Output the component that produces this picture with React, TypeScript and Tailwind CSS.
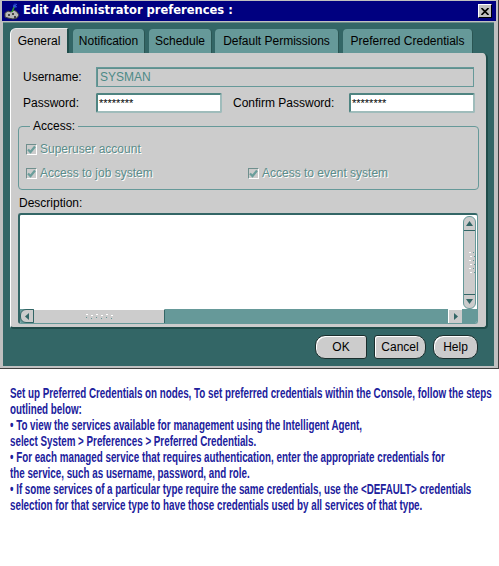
import React from "react";

function Check({ label, className = "" }: { label: string; className?: string }) {
  return (
    <div className={"flex items-center h-[14px] " + className}>
      <div className="w-[11px] h-[11px] bg-[#cccccc] border-t border-l border-[#6f8f8d] border-r border-b border-r-[#ffffff] border-b-[#ffffff] flex items-center justify-center">
        <svg width="9" height="9" viewBox="0 0 9 9">
          <path d="M1 4.5 L3.5 7 L8 1.5" stroke="#6a9e9b" strokeWidth="2.2" fill="none" />
        </svg>
      </div>
      <span className="ml-[3px] text-[12px] text-[#5b8d8a] [text-shadow:1px_1px_0_#ffffff] leading-none">{label}</span>
    </div>
  );
}

function Grip({ vertical }: { vertical?: boolean }) {
  const dots = [0, 1, 2, 3, 4, 5];
  return (
    <div className={vertical ? "flex flex-col gap-[3px]" : "flex gap-[3px]"}>
      {dots.map((i) => (
        <div key={i} className={vertical ? "flex gap-[2px] " + (i % 2 ? "ml-[1px]" : "") : "flex flex-col gap-[2px] " + (i % 2 ? "mt-[1px]" : "")}>
          <div className="w-[2px] h-[1px] bg-[#ffffff]" />
          <div className="w-[1px] h-[1px] bg-[#669999]" />
        </div>
      ))}
    </div>
  );
}

export default function App() {
  const textLines = [
    "Set up Preferred Credentials on nodes, To set preferred credentials within the Console, follow the steps",
    "outlined below:",
    "\u2022 To view the services available for management using the Intelligent Agent,",
    "select System > Preferences > Preferred Credentials.",
    "\u2022 For each managed service that requires authentication, enter the appropriate credentials for",
    "the service, such as username, password, and role.",
    "\u2022 If some services of a particular type require the same credentials, use the <DEFAULT> credentials",
    "selection for that service type to have those credentials used by all services of that type.",
  ];
  return (
    <div className="w-[499px] h-[566px] bg-white overflow-hidden font-['Liberation_Sans',Arial,sans-serif]">
      {/* Window */}
      <div className="w-[499px] h-[369px] bg-[#c0c0c0] border-r border-b border-r-[#404040] border-b-[#404040] pt-[1px] pl-[2px] flex flex-col">
        {/* Title bar */}
        <div className="w-[494px] h-[20px] bg-[#000080] flex items-center">
          <svg width="18" height="17" viewBox="0 0 18 17" className="ml-[1px]">
            <path d="M2 10 L5 8 L8 9 L11 7 L14 9 L16 12 L14 15 L10 16 L5 15 L2 14 Z" fill="#b8b8b8" stroke="#404040" strokeWidth="1" />
            <circle cx="6" cy="12" r="1" fill="#202020" />
            <circle cx="10" cy="11" r="1" fill="#202020" />
            <circle cx="12" cy="14" r="1" fill="#202020" />
            <path d="M9 9 L12 2" stroke="#30a030" strokeWidth="1.5" />
            <path d="M10 2 L14 4 M12 0.5 L12 5 M10 4 L14 1" stroke="#3050e0" strokeWidth="1" />
          </svg>
          <span className="ml-[2px] text-white font-bold text-[11.5px] font-['DejaVu_Sans',Verdana,sans-serif] leading-none">
            Edit Administrator preferences :
          </span>
          <div className="ml-auto mr-[4px] w-[14px] h-[14px] bg-[#c0c0c0] border-t border-l border-t-white border-l-white border-r border-b border-r-[#000000] border-b-[#000000] flex items-center justify-center">
            <svg width="8" height="7" viewBox="0 0 8 7">
              <path d="M0.5 0 L7.5 7 M7.5 0 L0.5 7" stroke="#000" strokeWidth="1.6" />
            </svg>
          </div>
        </div>
        {/* Body */}
        <div className="mt-[1px] ml-[1px] w-[491px] h-[344px] bg-[#336666] border-t border-t-[#6f8f8d] flex flex-col pl-[7px] pt-[5px]">
          {/* Tabs */}
          <div className="flex items-end h-[25px] text-[12px] text-black">
            <div className="w-[59px] h-[25px] bg-[#cccccc] rounded-tl-[6px] rounded-tr-[2px] border-l border-t border-l-white border-t-[#e8e8e8] border-r-2 border-r-[#1f4c4a] flex items-center justify-center">
              General
            </div>
            <div className="ml-[4px] w-[72px] h-[24px] bg-[#669999] rounded-t-[4px] border-r border-r-[#2a5553] flex items-center justify-center">
              Notification
            </div>
            <div className="ml-[4px] w-[63px] h-[24px] bg-[#669999] rounded-t-[4px] border-r border-r-[#2a5553] flex items-center justify-center">
              Schedule
            </div>
            <div className="ml-[3px] w-[124px] h-[24px] bg-[#669999] rounded-t-[4px] border-r border-r-[#2a5553] flex items-center justify-center">
              Default Permissions
            </div>
            <div className="ml-[4px] w-[130px] h-[24px] bg-[#669999] rounded-t-[4px] border-r border-r-[#2a5553] flex items-center justify-center">
              Preferred Credentials
            </div>
          </div>
          {/* Panel */}
          <div className="w-[478px] h-[276px] bg-[#cccccc] rounded-tr-[5px] rounded-b-[4px] border-l border-l-white border-r-2 border-b-2 border-r-[#1f4c4a] border-b-[#1f4c4a] flex flex-col pl-[7px] pt-[14px] text-[12px] text-black">
            {/* Username */}
            <div className="flex items-center h-[20px]">
              <span className="w-[78px] pl-[5px]">Username:</span>
              <div className="w-[378px] h-[20px] bg-[#cccccc] border border-[#669999] shadow-[inset_1px_1px_0_#5f8f8c] flex items-center pl-[3px] text-[#4d8a87]">
                SYSMAN
              </div>
            </div>
            {/* Password */}
            <div className="flex items-center h-[20px] mt-[6px]">
              <span className="w-[78px] pl-[5px]">Password:</span>
              <div className="w-[126px] h-[20px] bg-white border-2 border-t-[#4f8481] border-l-[#4f8481] border-r-[#9fbcbb] border-b-[#9fbcbb] rounded-[2px] flex items-center pl-[1px] text-[11px] leading-none">
                ********
              </div>
              <span className="ml-[11px] w-[116px]">Confirm Password:</span>
              <div className="w-[126px] h-[20px] bg-white border-2 border-t-[#4f8481] border-l-[#4f8481] border-r-[#9fbcbb] border-b-[#9fbcbb] rounded-[2px] flex items-center pl-[1px] text-[11px] leading-none">
                ********
              </div>
            </div>
            {/* Access group */}
            <div className="relative mt-[13px] w-[461px] h-[64px] border border-[#669999] rounded-[4px] flex flex-col pl-[7px] pt-[15px]">
              <span className="absolute left-[11px] top-[-8px] bg-[#cccccc] px-[3px] leading-[14px] text-[12px] text-black">Access:</span>
              <Check label="Superuser account" />
              <div className="flex mt-[10px]">
                <Check label="Access to job system" className="w-[222px]" />
                <Check label="Access to event system" />
              </div>
            </div>
            {/* Description */}
            <div className="mt-[6px] h-[14px] leading-[14px] pl-[1px]">Description:</div>
            <div className="mt-[3px] w-[460px] h-[111px] bg-white border-t-2 border-l-2 border-t-[#336666] border-l-[#336666] border-r border-b border-r-[#669999] border-b-[#669999] rounded-[3px] flex flex-col overflow-hidden">
              <div className="flex flex-1">
                <div className="flex-1" />
                <div className="w-[13px] mt-[1px] mr-[1px] bg-[#cccccc] border border-[#669999] rounded-[6px] flex flex-col items-center">
                  <div className="h-[14px] w-full border-b border-b-[#336666] flex items-center justify-center">
                    <svg width="7" height="5" viewBox="0 0 7 5"><path d="M3.5 0 L7 5 L0 5 Z" fill="#336666" /></svg>
                  </div>
                  <div className="flex-1 w-full flex items-center justify-center pl-[4px]">
                    <Grip vertical />
                  </div>
                  <div className="h-[14px] w-full border-t border-t-[#336666] flex items-center justify-center">
                    <svg width="7" height="5" viewBox="0 0 7 5"><path d="M0 0 L7 0 L3.5 5 Z" fill="#336666" /></svg>
                  </div>
                </div>
              </div>
              <div className="h-[14px] bg-[#669999] flex items-stretch">
                <div className="w-[14px] bg-[#cccccc] border border-[#336666] rounded-l-[6px] flex items-center justify-center">
                  <svg width="4" height="7" viewBox="0 0 4 7"><path d="M4 0 L4 7 L0 3.5 Z" fill="#336666" /></svg>
                </div>
                <div className="w-[131px] bg-[#cccccc] border-t border-t-white border-r border-r-[#336666] flex items-center justify-center">
                  <Grip />
                </div>
                <div className="flex-1" />
                <div className="w-[14px] bg-[#cccccc] border-t border-l border-t-white border-l-white flex items-center justify-center">
                  <svg width="4" height="7" viewBox="0 0 4 7"><path d="M0 0 L4 3.5 L0 7 Z" fill="#336666" /></svg>
                </div>
                <div className="w-[15px]" />
              </div>
            </div>
          </div>
          {/* Buttons */}
          <div className="flex justify-end mt-[6px] pr-[16px] text-[12px] text-black">
            <div className="w-[52px] h-[24px] bg-[#cccccc] border border-[#1a2e2d] rounded-l-[10px] rounded-r-[3px] shadow-[inset_1px_1px_0_#ffffff] flex items-center justify-center">
              OK
            </div>
            <div className="ml-[7px] w-[52px] h-[24px] bg-[#cccccc] border border-[#1a2e2d] rounded-r-[10px] rounded-l-[3px] shadow-[inset_1px_1px_0_#ffffff] flex items-center justify-center">
              Cancel
            </div>
            <div className="ml-[7px] w-[45px] h-[24px] bg-[#cccccc] border border-[#1a2e2d] rounded-[10px] shadow-[inset_1px_1px_0_#ffffff] flex items-center justify-center">
              Help
            </div>
          </div>
        </div>
      </div>
      {/* Text */}
      <div className="mt-[16px] ml-[10px] w-[720px] origin-top-left scale-x-[0.7] font-bold text-[14px] leading-[16px] text-[#20209c]">
        {textLines.map((l, i) => (
          <div key={i} className="whitespace-pre">{l}</div>
        ))}
      </div>
    </div>
  );
}
